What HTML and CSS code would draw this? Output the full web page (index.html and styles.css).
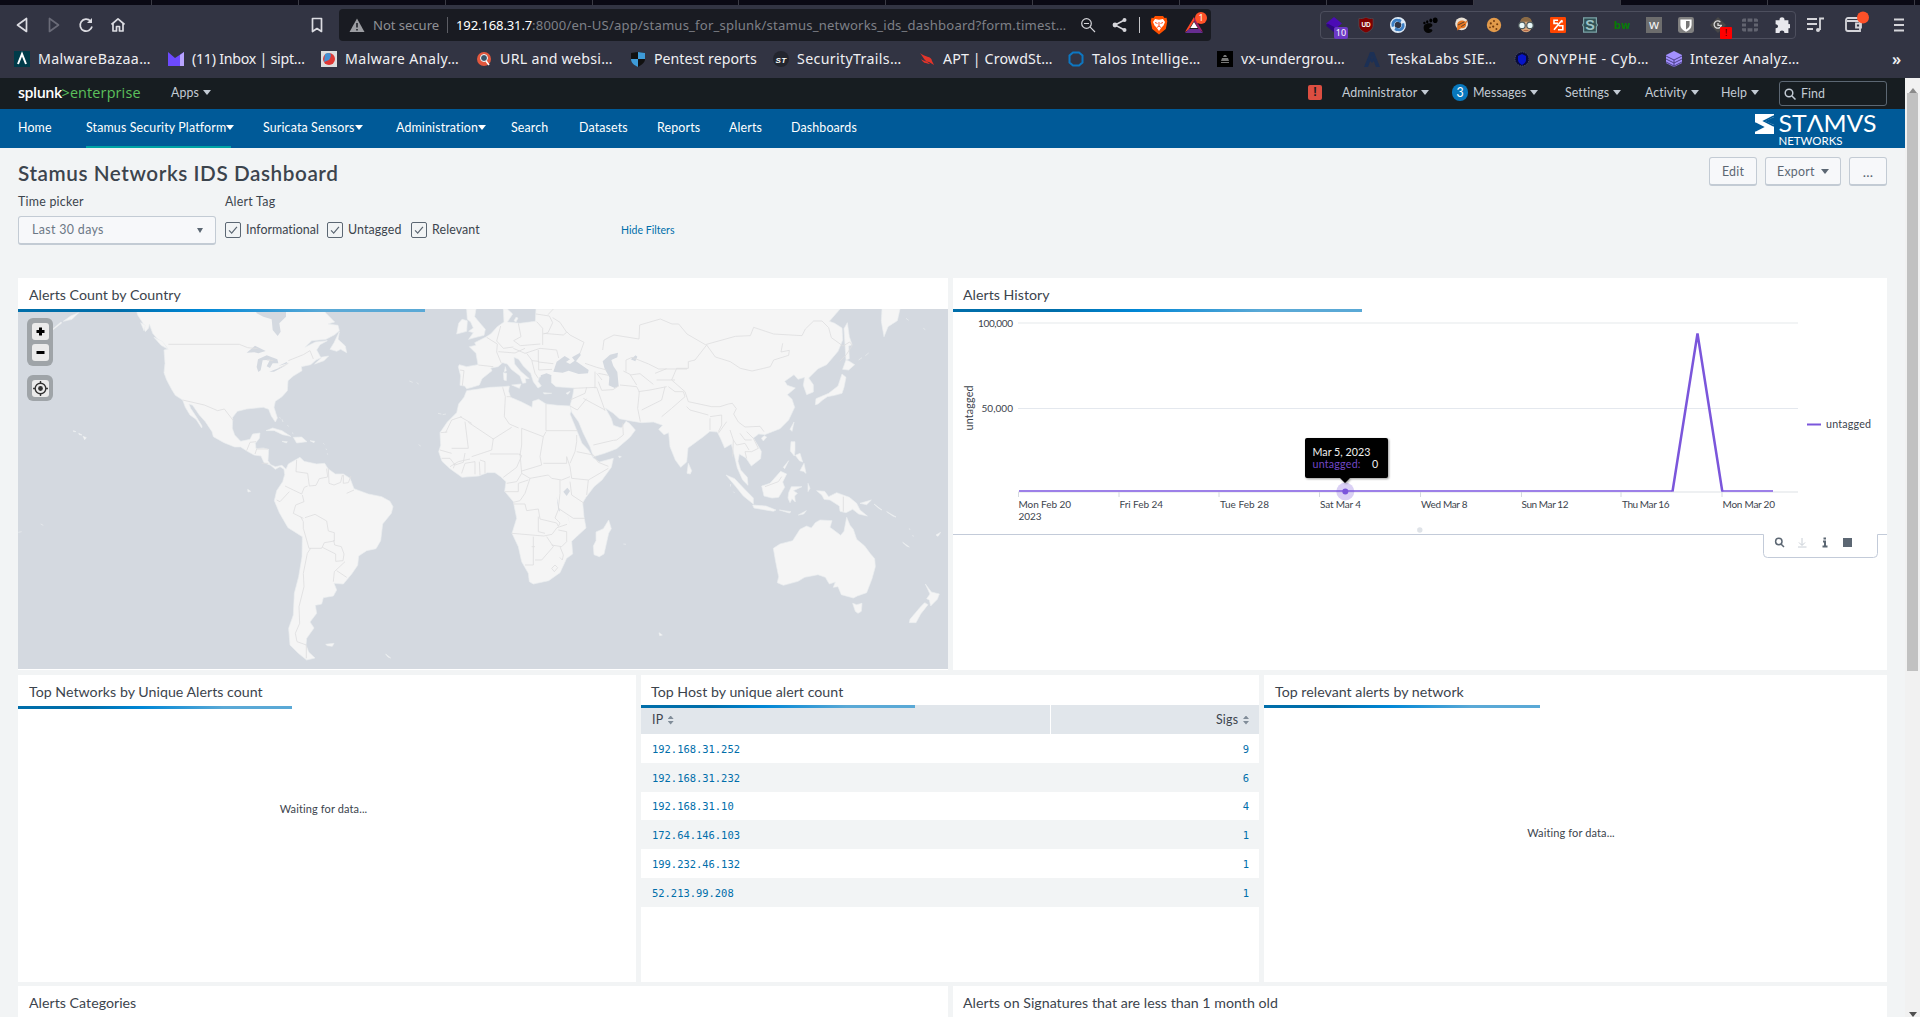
FILE: index.html
```html
<!DOCTYPE html>
<html lang="en">
<head>
<meta charset="utf-8">
<title>Stamus Networks IDS Dashboard</title>
<link rel="stylesheet" href="styles.css">
</head>
<body>
<div class="tabstrip"><i></i><i></i><i></i><i></i><i></i><i></i><i></i><i></i><i></i><i></i><i class="active"></i><i></i><i></i></div>

<div class="toolbar">
  <div class="browser-nav">
    <svg width="20" height="20" viewBox="0 0 20 20"><path d="M14.5 3.5v13L5.500 10z"/></svg>
    <svg class="dim" width="20" height="20" viewBox="0 0 20 20"><path d="M5.500 3.5v13L14.500 10z"/></svg>
    <svg width="20" height="20" viewBox="0 0 20 20"><path d="M14.500 6A6 6 0 1 0 16 11.500"/><path class="solid" d="M11 3h5v5h-5z"/></svg>
    <svg width="20" height="20" viewBox="0 0 20 20"><path d="M3.500 9.500L10 3.800l6.500 5.700M5 8.500V16h3.500v-4.500h3V16H15V8.500"/></svg>
  </div>
  <svg class="bookmark-icon" width="16" height="18" viewBox="0 0 16 18"><path d="M3.500 2.500h9v13L8 12.500l-4.500 3z"/></svg>
  <div class="urlbar">
    <svg class="warn" width="16" height="16" viewBox="0 0 16 16"><path d="M8 1.500L15.500 15H.5z"/><path class="mark" d="M8 6v4.500M8 12v1.600"/></svg>
    <span class="notsecure">Not secure</span><i class="sep"></i>
    <span class="url"><b>192.168.31.7</b><span>:8000/en-US/app/stamus_for_splunk/stamus_networks_ids_dashboard?form.timest…</span></span>
    <svg class="line zoomout" width="16" height="16" viewBox="0 0 16 16"><circle cx="6.500" cy="6.500" r="4.800"/><path d="M4 6.500h5M10.200 10.200L15 15"/></svg>
    <svg class="line share" width="16" height="16" viewBox="0 0 16 16"><path d="M12.500 3L3 8l9.500 5"/><g class="fill"><circle cx="12.500" cy="3" r="2"/><circle cx="3" cy="8" r="2.400"/><circle cx="12.500" cy="13" r="2"/></g></svg>
    <i class="sep light"></i>
    <svg class="brave" width="18" height="20" viewBox="0 0 18 20"><path fill="#ff5000" d="M5 1h8l1.500 2 2-.2.8 3.700-1.500 7.500L9 19.500 2.200 14 .7 6.500l.8-3.700 2 .2z"/><path fill="#fff" d="M5 4l4 .8L13 4l2 3-1.500 3.500-2 2L9 16l-2.500-3.500-2-2L3 7z"/><path stroke="#fb542b" fill="none" d="M5 7.500l2.500 1M13 7.500l-2.500 1M9 7v4l-2 1.500M9 11l2 1.500"/></svg>
    <span class="bat"><svg width="20" height="18" viewBox="0 0 20 18"><path fill="#ff4724" d="M10 1L1 16l3.500-2L10 5z"/><path fill="#9e1f63" d="M10 1l9 15-4-2-5-9z"/><path fill="#662d91" d="M1 17l4-4h10l4 4z"/><path fill="#fff" d="M10 6l3.700 6H6.300z"/></svg><em>1</em></span>
  </div>
  <div class="extensions">
    <svg viewBox="0 0 20 20"><path fill="#4b0bb5" d="M10 0l10 8-9 7-11-7z"/><path fill="#2f0780" d="M0 11l10 8 5-4-13-7z"/></svg>
    <svg viewBox="0 0 20 20"><path fill="#800000" stroke="#4d4d56" d="M10 0c3 2 6 2 9 2v8c0 5-4 8-9 10-5-2-9-5-9-10V2c3 0 6 0 9-2z"/><text x="10" y="12" fill="#fff" class="tiny">UD</text></svg>
    <svg viewBox="0 0 20 20"><circle cx="10" cy="10" r="7" fill="none" stroke="#dfeaf5" stroke-width="6"/><path d="M4 12C2 6 7 2 12 5l1-2M16 8c2 6-3 10-8 7l-1 2" fill="none" stroke="#3d7fc4" stroke-width="3.500"/></svg>
    <svg viewBox="0 0 20 20"><path fill="#050505" d="M3 10c3-3 10-3 10 0 0 3-4 3-4 4 0 2 4 0 4 3 0 1-2 3-5 3-6 0-7-7-5-10z"/><ellipse cx="16.500" cy="4" rx="3" ry="3.500"/><ellipse cx="11" cy="4.500" rx="1.800" ry="2.500"/><ellipse cx="6.500" cy="6" rx="1.500" ry="2"/><circle cx="3" cy="7.500" r="1.500"/></svg>
    <svg viewBox="0 0 20 20"><circle cx="9.500" cy="8.500" r="8" fill="#e8e0d5"/><path fill="#e87722" d="M4 9c1-5 7-6 10-3l3-2-2 5c1 3-3 6-6 5l-5 3z"/><path stroke="#333" fill="none" d="M5 10l8-4M9 12l5-3"/></svg>
    <svg viewBox="0 0 20 20"><circle cx="10" cy="10" r="9" fill="#e29a4a"/><g fill="#70380c"><circle cx="6" cy="8" r="1.300"/><circle cx="10" cy="5" r="1.200"/><circle cx="14" cy="9" r="1.300"/><circle cx="9" cy="12" r="1.400"/><circle cx="13" cy="15" r="1.200"/><circle cx="5" cy="13" r="1"/></g></svg>
    <svg viewBox="0 0 20 20"><path fill="#d9a77c" d="M3 7c0-8 14-8 14 0v6c-1 8-13 8-14 0z"/><path fill="#8a6a45" d="M3 6c0-8 14-8 14 0z"/><g fill="#e7f7f8" stroke="#4f5b5c" stroke-width="1.500"><circle cx="5" cy="10.500" r="4"/><circle cx="15" cy="10.500" r="4"/></g><path stroke="#a75034" d="M7 17h6"/></svg>
    <svg viewBox="0 0 20 20"><rect width="20" height="20" rx="1.500" fill="#ff4500"/><path d="M10 4H5v4h5M10 16h6v-5h-5M15 4L5 16M15 4v3" fill="none" stroke="#fff" stroke-width="2"/></svg>
    <svg viewBox="0 0 20 20"><path fill="#315155" stroke="#7ba3a6" stroke-width="1.500" d="M2 1h16v7l1.300 2-1.300 2v7H2v-7L.7 10 2 8z"/><text x="10" y="16.500" fill="#9dc3c6" class="glyph-s">S</text></svg>
    <svg viewBox="0 0 20 20"><text x="10" y="15" fill="#087b08" class="glyph-bw">bw</text></svg>
    <svg viewBox="0 0 20 20"><rect width="20" height="20" fill="#6d6d6d"/><text x="10" y="15.500" fill="#f4f4f4" class="glyph-w">w</text></svg>
    <svg viewBox="0 0 20 20"><rect width="20" height="20" rx="3" fill="#808080"/><path fill="#fff" d="M3 3h14v7c0 4-3 6.500-7 8.500-4-2-7-4.500-7-8.500z"/><path fill="#777" d="M10 5h4.500v5c0 2.500-2 4-4.500 5.500z"/></svg>
    <svg viewBox="0 0 20 20"><path fill="#474747" d="M10 0l10 10-10 10L0 10z"/><path d="M13 6.500a4.500 4.500 0 1 0 1 4M10 7.500v3h5" fill="none" stroke="#ddd" stroke-width="1.600"/></svg>
    <svg viewBox="0 0 20 20"><path fill="#626470" d="M0 4a2 2 0 0 1 2-2h3v4H0zM7 2h6v4H7zM15 2h3a2 2 0 0 1 2 2v2h-5zM0 8h5v4H0zM15 8h5v4h-5zM0 14h5v4H2a2 2 0 0 1-2-2zM7 14h6v4H7zM15 14h5v2a2 2 0 0 1-2 2h-3z"/></svg>
    <svg viewBox="0 0 20 20"><path fill="#e8e8ed" d="M2 4h5c-1-5 7-5 6 0h5v5c4-1 4 6 0 5v6h-5c0-4-6-4-6 0H2v-6c4 0 4-5 0-5z"/></svg>
    <span class="ext-count">10</span><span class="ext-alert">!</span>
  </div>
  <svg class="line media" width="20" height="20" viewBox="0 0 20 20"><path d="M2 4h10M2 9h10M2 14h6M15 15V3.500h4"/><circle class="fill" cx="13" cy="15" r="2"/></svg>
  <svg class="line wallet" width="26" height="26" viewBox="0 0 26 26"><path d="M16 8H5a2 2 0 0 0-2 2v9a2 2 0 0 0 2 2h12V11H4M18 13.500h-5v4h5z"/><circle cx="20" cy="7.500" r="6" fill="#ff5128" stroke="none"/></svg>
  <svg class="line burger" width="12" height="16" viewBox="0 0 12 16"><path d="M1 2.500h10M1 8h10M1 13.500h10"/></svg>
</div>

<div class="bookmarks">
  <a class="b1"><svg viewBox="0 0 16 16"><path fill="#003b49" d="M0 0h16v16H0z"/><path d="M4 13L8 3l4 10" fill="none" stroke="#fff" stroke-width="2"/></svg>MalwareBazaa…</a>
  <a class="b2"><svg viewBox="0 0 16 16"><path fill="#6d4aff" d="M0 1l7 6 9-6v14H0z"/><path fill="#b8a4ff" d="M12 4l4-3v14h-4z"/></svg>(11) Inbox | sipt…</a>
  <a class="b3"><svg viewBox="0 0 16 16"><path fill="#dedede" d="M0 0h16v16H0z"/><circle cx="8" cy="8" r="6" fill="#df3935"/><path fill="#4690d1" d="M4 3c8-4 6 4 4 6l-5 2z"/></svg>Malware Analy…</a>
  <a class="b4"><svg viewBox="0 0 16 16"><circle cx="8" cy="8" r="7" fill="#e2583e"/><circle cx="8" cy="7" r="3.500" fill="#39556b" stroke="#fff"/><path d="M10 10l3 4" stroke="#fff" stroke-width="1.500"/></svg>URL and websi…</a>
  <a><svg viewBox="0 0 16 16"><path fill="#111" d="M1 2l7-1 7 1v6c0 4-4 6-7 8-3-2-7-4-7-8z"/><path fill="#3e9bd8" d="M8 1l7 1v6H8zM1 8h7v8c-4-2-7-4-7-8z"/></svg>Pentest reports</a>
  <a class="b6"><svg viewBox="0 0 16 16"><circle cx="8" cy="8" r="8" fill="#23252e"/><text x="8" y="11.500" fill="#fff" class="glyph-st">ST</text></svg>SecurityTrails…</a>
  <a class="b7"><svg viewBox="0 0 16 16"><path fill="#e3342a" d="M1 2c4 4 12 3 12 8l2 4-5-3c-4 0-6-5-9-9zm1 6c4 3 5 1 9 5-5-1-7-1-9-5z"/></svg>APT | CrowdSt…</a>
  <a class="b1"><svg viewBox="0 0 16 16"><path d="M5 1.500h6l3.500 3v7l-3.500 3H5l-3.500-3v-7z" fill="none" stroke="#0d77c2" stroke-width="2"/></svg>Talos Intellige…</a>
  <a class="b7"><svg viewBox="0 0 16 16"><path d="M0 0h16v16H0z"/><path fill="#777" d="M4 11h8v1H4zm1-4h6l1 3H4zm2-3h2l1 2H6z"/></svg>vx-undergrou…</a>
  <a class="b6"><svg viewBox="0 0 16 16"><path fill="#1c3055" d="M6 1h4l6 15h-4L8 5 4 16H0zm0 9l2-4 2 4-2 2z"/></svg>TeskaLabs SIE…</a>
  <a class="b11"><svg viewBox="0 0 16 16"><circle cx="9" cy="8" r="7" fill="#090b39" stroke="#535663" stroke-dasharray="1 1"/><path fill="#0714c9" d="M5 5l4-2 4 2v4c0 2-2 4-4 5-2-1-4-3-4-5z"/></svg>ONYPHE - Cyb…</a>
  <a class="b4"><svg viewBox="0 0 16 16"><path fill="#a390ff" d="M8 0l8 4v8l-8 4-8-4V4z"/><path d="M0 5l8 4 8-4M0 8l8 4 8-4M0 11l8 4 8-4M8 9v7" stroke="#4c418b" fill="none"/></svg>Intezer Analyz…</a>
  <span class="more">»</span>
</div>

<div class="viewport">
<main>
  <div class="splunkbar">
    <span class="brand"><b>splunk</b><span>&gt;enterprise</span></span><span class="apps">Apps <i class="caret"></i></span>
    <span class="alertbadge">!</span><span>Administrator <i class="caret"></i></span><span class="messages"><em>3</em>Messages <i class="caret"></i></span><span>Settings <i class="caret"></i></span><span>Activity <i class="caret"></i></span><span>Help <i class="caret"></i></span>
    <span class="find"><svg width="12" height="12" viewBox="0 0 12 12"><circle cx="5" cy="5" r="3.800"/><path d="M8 8l3.500 3.500"/></svg>Find</span>
  </div>
  <nav>
    <a>Home</a><a class="current"><span>Stamus Security Platform<i class="caret"></i></span></a><a>Suricata Sensors<i class="caret"></i></a><a>Administration<i class="caret"></i></a><a>Search</a><a>Datasets</a><a>Reports</a><a>Alerts</a><a>Dashboards</a>
    <svg class="stamus" width="124" height="36" viewBox="0 0 124 36"><path fill="#fff" d="M1 2h19v3l-9 4 9 4v9H1v-3l8-4-8-4z"/><path d="M20 4l-10 5 10 5M1 11l8 4-8 4" stroke="#005a98" stroke-width="1.500" fill="none"/><text x="24.500" y="20" textLength="98" lengthAdjust="spacingAndGlyphs" class="lg">STΛMVS</text><text x="24.500" y="32.500" textLength="64" lengthAdjust="spacingAndGlyphs" class="sm">NETWORKS</text></svg>
  </nav>

  <header>
    <h1>Stamus Networks IDS Dashboard</h1>
    <div class="actions"><button>Edit</button><button>Export <i class="caret"></i></button><button class="dots">...</button></div>
  </header>
  <div class="filters">
    <div class="picker"><label>Time picker</label><div class="select">Last 30 days<i class="caret"></i></div></div>
    <div class="tags"><label>Alert Tag</label>
      <div class="checks">
        <span><svg viewBox="0 0 16 16"><path d="M3.500 8.500l3 3 6-7"/></svg>Informational</span>
        <span><svg viewBox="0 0 16 16"><path d="M3.500 8.500l3 3 6-7"/></svg>Untagged</span>
        <span><svg viewBox="0 0 16 16"><path d="M3.500 8.500l3 3 6-7"/></svg>Relevant</span>
      </div></div>
    <a class="hide">Hide Filters</a>
  </div>

  <div class="row first">
    <section><h2>Alerts Count by Country</h2>
      <div class="map">
        <svg width="930" height="360" viewBox="54 27 2790 1080">
          <rect x="54" y="27" width="2790" height="1080" class="sea"/>
          <g class="land">
            <path d="M408 27L413 45 428 68 436 95 446 84 448 72 458 100 470 114 498 138 502 148 492 150 495 190 492 218 500 240 516 270 526 286 548 300 556 322 570 345 588 358 605 384 606 378 590 352 572 325 567 312 578 316 598 345 616 365 636 395 640 410 672 428 704 441 722 441 742 454 762 465 783 468 792 488 812 496 826 508 840 500 852 508 854 524 848 545 830 572 823 602 838 638 864 683 907 710 906 770 896 830 883 880 880 945 866 985 870 1035 895 1060 920 1080 945 1074 926 1056 918 1035 920 1015 942 984 930 966 950 940 946 916 965 912 970 893 1000 888 1010 870 1002 850 1030 852 1055 822 1073 796 1076 768 1100 752 1128 746 1142 722 1148 672 1174 640 1179 620 1170 604 1145 590 1105 582 1078 572 1062 566 1050 535 1030 522 1006 522 984 506 974 490 950 492 912 484 900 472 882 482 865 492 858 508 846 496 826 500 812 494 804 482 806 448 790 444 768 446 766 430 778 415 780 399 758 402 750 418 722 424 704 405 697 385 698 352 712 334 740 327 790 322 806 328 814 348 826 366 832 354 822 322 826 304 846 290 862 272 864 242 880 228 906 212 904 200 932 194 948 180 966 172 944 192 972 182 986 168 962 172 950 150 960 134 982 122 946 126 915 142 935 122 978 118 1004 104 1018 92 1014 76 984 72 1004 66 978 40 968 27z"/>
            <path d="M1018 95L1014 118 1036 138 1040 158 1022 148 1010 154 990 148 1002 128zM798 392l20-8 28 8 26 17-24-5-25-12zM880 412l25-1 16 14-31 4zM846 424l16 1-3 4zM930 422l14 2-2 4zM462 112l25 12 18 24-22-12zM422 68l14 8-4 16zM155 90l28-24 2 3-28 22zM190 64l22-16 24-10-20 20zM220 392l8 3-7 0zM236 400l10 5-8-1zM249 409l10 4-5 6zM743 568l9 6-8 2zM977 1033l25-3-5 9-15-2zM1157 1062l15 12-8-3zM838 352l4 3M846 358l3 8M862 376l4 3M876 398l4 3M970 430l3 3M978 446l2 4M982 460l1 4M55 697l10-2M122 672l8 4M1228 243l10 4M1250 248l6 4M1314 340l10 2M1328 344l10-2M1256 434l6 4"/>
            <g transform="translate(1410)">
              <path d="M-10 272L20 268 60 262 98 260 118 258 116 274 122 292 155 306 186 322 188 304 206 298 228 312 262 316 300 318 304 332 300 342 322 395 336 430 355 450 370 474 388 486 430 475 424 502 396 540 372 560 348 592 338 608 342 650 348 684 326 704 305 724 308 762 290 775 270 818 236 842 190 852 178 845 175 820 155 785 145 740 126 700 140 655 130 605 104 574 108 545 92 530 75 518 52 518 26 528-24 532-60 506-84 484-94 455-88 436-90 398-68 366-40 338-34 312-18 292z"/>
              <path d="M-35 200L-28 228-30 256-16 258-10 266 6 262 28 255 36 236 66 212 62 204 84 200 98 188 112 192 124 208 150 228 158 250 168 248 166 236 178 236 152 214 134 192 132 172 146 178 160 198 182 220 190 245 204 264 214 258 204 244 208 232 228 222 244 226 244 248 258 260 284 262 312 264 308 288 300 318 306 338 326 366 340 400 360 440 370 470 404 460 440 446 480 412 496 390 478 370 468 364 454 384 430 376 424 356 406 324 430 340 448 356 478 362 514 368 550 366 578 376 566 388 582 404 596 398 600 440 616 480 632 502 650 486 654 444 700 410 720 394 742 396 752 416 764 444 784 432 794 470 802 504 818 540 834 556 832 532 812 510 804 484 808 462 828 474 844 498 872 476 874 454 850 414 866 402 884 404 930 386 956 360 974 322 966 298 952 284 976 264 952 256 944 244 972 224 984 238 1004 232 1000 256 1010 284 1030 276 1030 254 1016 234 1044 206 1070 194 1104 154 1118 120 1116 84 1094 70 1078 64 1110 27 L198 27 196 64 150 70 112 66 128 42 112 27 100 27 102 66 82 80 62 102 46 112 14 128 18 136-2 140 18 160 24 194-10 200-32 194z"/>
              <path d="M-10 27L18 27 14 50 34 74 46 88 42 106 18 112-4 118 10 98-4 94 10 84 2 66-8 58zM-40 102L-10 94-8 62-24 58-34 70zM102 240l-2-22 10 2-1 22zM103 215l3-15 3 12zM125 255l28-3-5 13zM220 278l25 2-22 2zM288 280l12-6-6 9zM132 62l6-10 6 2-6 12z"/>
              <path d="M1036 314L1038 296 1076 280 1104 258 1116 222 1128 232 1122 262 1116 280 1094 286 1072 290 1058 300 1044 312zM1118 208L1128 180 1138 184 1154 194 1136 210zM1122 86L1132 68 1138 110 1146 134 1136 138 1138 176 1128 180zM1236 27L1290 27 1282 62 1254 80 1242 110 1234 64zM960 388l12-22-6 28zM874 415l8-8 8 4-10 12zM655 490l10 22-4 10-10-2zM963 425l12 0 0 25-2 18-12-15zM976 466l14-6 8 26-10-4zM990 512l12-22 6 30-8-6zM940 502l16-20-12 24zM768 525L794 536 824 568 850 594 850 612 820 588 796 558zM875 558L900 550 932 514 950 522 938 546 944 562 926 592 906 594 882 588zM956 578L964 560 996 560 970 572 982 580 974 588 976 606 966 596 960 608 954 594zM848 615L888 618 918 630 910 634 852 624zM928 630l35 5-5 4zM985 645l24-13-8 10zM1014 550l6 15-6 10zM1040 572L1064 574 1076 590 1100 578 1138 592 1160 610 1170 630 1192 648 1166 642 1148 628 1128 638 1110 634 1108 618 1080 600 1062 598 1056 586z"/>
              <path d="M910 745L930 732 968 722 990 688 1010 678 1024 684 1036 668 1050 660 1086 662 1080 682 1112 706 1122 694 1130 652 1140 676 1150 688 1160 718 1184 738 1200 760 1214 776 1216 800 1206 836 1190 878 1162 888 1150 894 1114 884 1104 860 1090 862 1096 846 1078 852 1066 832 1044 824 1004 832 984 844 940 856 922 848 926 830 916 780zM1148 910L1160 914 1176 910 1174 934 1164 940 1156 934zM1366 852L1384 876 1408 882 1402 898 1382 918 1378 900 1370 896 1380 882zM1352 920L1364 908 1374 914 1352 942 1338 968 1318 968 1320 958zM416 660L424 686 416 700 402 762 388 770 372 764 370 738 378 722 378 696 400 686zM446 468l8 2-6 3zM567 998l10 7-8 2zM1398 705l14-8-8 12zM1298 727l20 14-8-3zM1170 610l34-10-14 14zM1212 612l24 18-8-4zM1250 635l28 16-8-2zM1186 167l10-8M1166 180l10-7M782 552l-1 8M790 575l4 4M1308 55l8 6M1360 85l6 4M460 732l8 1M1318 685l2 5M1328 705l2 5"/>
            </g>
          </g>
          <g class="sea">
            <path d="M765 27L770 40 790 50 815 58 818 90 833 108 842 95 838 70 858 50 858 27zM740 158l25-21 32 16-22 7-12-3zM775 216l-5-15 4-23 26-12 32 12 3 12-17 0-8 14-10-5 10-20-22 2-6 30zM808 215l52-20-38 20zM835 198l25-12 3 4z"/>
            <g transform="translate(1410)"><path d="M250 215L260 185 284 168 300 178 288 186 300 192 314 182 306 172 330 158 332 166 318 184 356 210 354 220 326 222 296 212 278 218zM398 184L420 164 444 158 442 172 424 180 430 198 442 216 446 258 434 264 416 256 418 232 404 206zM482 178l15-12 5 4-6 14zM280 575l12-12 8 10-10 15zM260 590l10 45-5-5zM292 645l8 30-5-20zM212 226L230 220 244 226 238 240 246 262 228 262 216 244z"/></g>
          </g>
          <g class="border">
            <path d="M505 133h213l25 10 30 3M800 180l20 2M835 205l30-15M865 182l45-18 20-12 10 25M548 300l65 15 40 17 20-5 27 35M740 452l10-25 18-2M765 462l5-15 34 0M785 490l20 0M890 480l-2 35 35 5 5 38 20-2 10-20 25-5-3-25M985 505l2 45 15 5 20-8 5-22M1030 525v25l15-2 8-20M1040 580l22-10M855 558l50 24 8-20 10-4M830 600l10 5 28-30M907 585l5 20-25 10-7 25 30 15M915 653l30-10 35 20 5 30 18 5 0 25-30 5-8 17-38 0-17-60 0-20-8-15M967 742l40 20 0 22 22-2 3-20-8-22-20-5-3-15M1035 785l-32 30-3 30M1010 812l30 20M932 745l-10 15-12 60 2 40-15 60 2 50-13 30 5 25 28 10v40M1385 350l-30 10-18 38M1322 398l20-2M1355 445h50l-10-80M1380 350l35 20M1320 450l35 10M1325 475l25 0 15 20 25-8 5-28M1360 505l5-15M1385 520l10-30 30-5"/>
            <g transform="translate(1410)">
              <path d="M-30 210l12 2-5 45M25 195l45 5M50 112l32 20-2 24 14 34M92 78l-12 45 20 22 30-4M145 70l8 40-22 12 20 15 60-5M200 65l18 20 0 50M198 42l40 6 10 20-14 30-14 4M234 44l16-17M220 100l60 5 10-8-20-30-22-14M290 95l10 10 42 22-12 33M130 145l35 15 45-15 50 5 6 24M85 155l50 4 30-14M170 160l15 20 10 40 10 15M205 150l0 36 45 5M186 182l20 2 0 26 40-2M345 190l35 12 30 8M375 215l0 50M380 220l16 20M385 220l30 6M310 265l70-3 25 70M300 300l45-20 5-18M300 318l22 12 28-34M340 295l65 35M370 435l60-14 10-1M440 420l20-15-2-35M385 245l10 26 34-2 18-12M398 150l4-30 30-15 75 12 2-42 62-18 35 15 20 0 25 30 55 32 90-25 45-2 10-25 60 20 85 5 10-20 25-24 25 0 20 20 8 30 35 25 20-12 8 10-18 28-20 20M710 135l26 36 45 14 30 20 35 8 35-8 20-5 10-20 45-14 2-15-25 5 5-26M710 135l-35 45-20 5 0 20-35 0-15 35 40 35 10 30 70 15 25 0 25-8 12-2 12 16-8 16 14 24 20 15 45-2 12 16M450 255l50 5 8 15-5 50 8 40M505 275l35-5 50-10M500 255l-20-32-20-10M468 215v-35l18-8 50 20 30 15 85 0M480 225l30-4 40 32M555 220l35-14M560 240l55 0M585 260l-10 40-60 30M595 260l20 15 25 0 5 15-40 35-30 25M650 320l10 10 55 15M720 355l0 35M720 350l35-5 0 30-10 20M770 365l-25 35M780 390l10 30-2 50M790 420l10 15 25-5 12 20M830 395l20 20 15 30-20 10-20 0 5 20M810 400l15 20 20 0M885 560l40-15 10-15M1120 590v45"/>
              <path d="M228 312v80h95M228 395l-8 15-65-25 0 50-5 30M98 262l8 28-3 60 15 22 28 12M110 290l14 0M125 382l-55 35-75-50M70 415l-5 35-60 20M60 462l85 0 10 5-15 35-40 30M220 410l-10 60 5 25-60 18M150 460l5 60-15 25-30 5M155 520l25 15 55-10 10 10 30 5 25-10M220 490l70 0 0-20 10 30 5 35 50 5 60-35M320 405l0 20-5 30-15 35M320 455l50 10 15 22 30 12M355 540l-5 45M300 545l5 40 38 25M270 540v40l-5 45 45 30 35 0M180 535l-15 45-15 22-20 5M105 575l40 0 0-25 30-10M130 612h35l5 20 35-5 5 30 50 12 5 10 5-10-15-15 10-25M205 650l0 45 20 5M126 700l95 8 25-5 15-20 30-10M190 710l0 85-25 0M195 740l-10 0M230 710l20 30-35 40-20 0M245 735l30 5 15-15 0-30-25-5M270 740l10 25-3 15-8-8M245 805l10-10 8 8-10 12zM45 520v-35l-15-5M30 525l-2-40M15 485v38M-60 500l25-15 35-8"/>
            </g>
          </g>
        </svg>
        <div class="mapctl zoomctl"><span><svg viewBox="0 0 17 17"><path d="M4.500 8.500h8M8.500 4.500v8"/></svg></span><span><svg viewBox="0 0 17 17"><path d="M4.500 8.500h8"/></svg></span></div>
        <div class="mapctl locate"><span><svg viewBox="0 0 16 16"><circle cx="8" cy="8" r="5"/><circle cx="8" cy="8" r="1.600" fill="#333"/><path d="M8 1v2M8 13v2M1 8h2M13 8h2"/></svg></span></div>
      </div>
    </section>
    <section><h2>Alerts History</h2>
      <svg class="chart" width="934" height="252" viewBox="953 309 934 252">
        <path d="M1018 323h780" class="grid g2"/><path d="M1018 408.500h780" class="grid"/>
        <path d="M1018 492h780" class="axis"/>
        <path class="tick" d="M1018.500 492v5M1119 492v5M1219 492v5M1319.500 492v5M1420.500 492v5M1521.500 492v5M1621 492v5M1722 492v5"/>
        <path d="M1019 491h653.500M1722 491h51" class="flat"/><path d="M1672.500 491.500l25-158 24.800 158" class="peak"/>
        <g class="lbl"><text x="978" y="327" textLength="35">100,000</text><text x="981.500" y="412" textLength="31.500">50,000</text>
          <text class="un" transform="translate(972.500 430.500) rotate(-90)" textLength="45">untagged</text><text class="un" x="1826" y="428" textLength="45">untagged</text>
          <text x="1018.500" y="508" textLength="52.500">Mon Feb 20</text><text x="1018.500" y="520" textLength="23">2023</text><text x="1119.500" y="508" textLength="43.500">Fri Feb 24</text><text x="1220" y="508" textLength="49">Tue Feb 28</text><text x="1320" y="508" textLength="41">Sat Mar 4</text><text x="1421" y="508" textLength="46.500">Wed Mar 8</text><text x="1521.500" y="508" textLength="47">Sun Mar 12</text><text x="1622" y="508" textLength="47.500">Thu Mar 16</text><text x="1722.500" y="508" textLength="52.500">Mon Mar 20</text></g>
        <path d="M1807 424.500h14" class="peak key"/>
        <circle cx="1345.300" cy="491.500" r="9" fill="#7b56db" opacity=".28"/><circle cx="1345.300" cy="491.500" r="3" fill="#7b56db"/>
        <g class="tip"><path d="M1307 438h79a2 2 0 0 1 2 2v36a2 2 0 0 1-2 2h-36l-5 5-5-5h-33a2 2 0 0 1-2-2v-36a2 2 0 0 1 2-2z"/><text class="un" x="1312.500" y="455.500" textLength="58">Mar 5, 2023</text><text x="1312.500" y="468" textLength="48" class="v un">untagged:</text><text class="un" x="1372" y="468">0</text></g>
        <circle cx="1419.800" cy="530" r="2.700" fill="#dfe3e8"/>
        <path class="foot" d="M953 534.500h810.500v19a4 4 0 0 0 4 4h106a4 4 0 0 0 4-4v-19h9.500"/>
        <g class="tools"><circle cx="1778.800" cy="541.500" r="3.200"/><path d="M1781 544l3 3"/><path class="off" d="M1802 538v7M1799 542.500l3 3 3-3M1798 547h8.500"/><path class="info" d="M1823.500 538.500h2.500M1823 541.500h2v5M1822.500 546.500h5"/><path class="stop" d="M1843 538h9v9h-9z"/></g>
      </svg>
    </section>
  </div>

  <div class="row second">
    <section class="low"><h2>Top Networks by Unique Alerts count</h2><p class="wait w1">Waiting for data...</p></section>
    <section><h2>Top Host by unique alert count</h2>
      <table><thead><tr><th>IP <i class="sort"></i></th><th>Sigs <i class="sort"></i></th></tr></thead>
        <tbody><tr><td>192.168.31.252</td><td>9</td></tr><tr><td>192.168.31.232</td><td>6</td></tr><tr><td>192.168.31.10</td><td>4</td></tr><tr><td>172.64.146.103</td><td>1</td></tr><tr><td>199.232.46.132</td><td>1</td></tr><tr><td>52.213.99.208</td><td>1</td></tr></tbody></table>
    </section>
    <section><h2>Top relevant alerts by network</h2><p class="wait w2">Waiting for data...</p></section>
  </div>

  <div class="row third"><section><h2>Alerts Categories</h2></section><section><h2>Alerts on Signatures that are less than 1 month old</h2></section></div>
</main>
<aside class="scroll"><i class="up"></i><i class="thumb"></i><i class="down"></i></aside>
</div>
</body>
</html>
```
FILE: styles.css
```css
* { box-sizing: border-box; }
body { margin: 0; height: 1017px; overflow: hidden; font: 12.4px/16px Lato, sans-serif; color: #3c444d; background: #f2f4f5; display: flex; flex-direction: column; }
svg { flex: none; display: block; }
i, em { font-style: normal; }

.tabstrip { display: flex; flex: none; height: 5px; background: #0a0914; padding-left: 5px; }
.tabstrip i { width: 146.900px; flex: none; border-right: 1px solid #3b3b45; }
.tabstrip .active { background: #323443; }

.toolbar { height: 37px; flex: none; background: #323443; display: flex; align-items: center; padding: 4px 0 1px 12px; color: #e3e3e8; font-family: "Noto Sans", sans-serif; }
.browser-nav { display: flex; gap: 12px; width: 297px; }
.browser-nav svg, .bookmark-icon { fill: none; stroke: #dcdce2; stroke-width: 1.700; stroke-linejoin: round; }
.browser-nav .dim { stroke: #6a6b78; }
.browser-nav .solid { fill: #dcdce2; stroke: none; clip-path: polygon(100% 0, 100% 100%, 0 100%); }
.urlbar { margin-left: 14px; width: 872px; height: 32px; border-radius: 4px; background: #191b22; display: flex; align-items: center; padding-left: 10px; font-size: 13.100px; }
.warn { fill: #9c9da2; margin-right: 8px; }
.warn .mark { stroke: #191b22; stroke-width: 1.500; }
.notsecure { width: 74px; color: #8f9095; letter-spacing: -.05px; }
.sep { width: 1px; height: 16px; background: #5c5d64; margin-right: 8px; flex: none; }
.url { width: 624px; white-space: nowrap; color: #7e8087; letter-spacing: .190px; }
.url b { font-weight: 400; color: #fff; display: inline-block; width: 76px; letter-spacing: -.15px; }
.line { fill: none; stroke: #d5d5da; stroke-width: 1.500; }
.line .fill { fill: #d5d5da; stroke: none; }
.zoomout { stroke-width: 1.200; }
.share { margin-left: 16px; }
.sep.light { background: #c4c4c8; margin: 0 10px 0 11px; }
.bat { position: relative; margin-left: 16px; }
.bat em { position: absolute; left: 11px; top: -4px; width: 12px; height: 12px; border-radius: 6px; background: #ff5128; color: #fff; font-size: 9px; line-height: 12px; text-align: center; }
.extensions { position: relative; margin-left: 109px; width: 476px; height: 28px; border: 1px solid #4d4f5e; border-radius: 4px; display: flex; align-items: center; gap: 16px; padding-left: 5px; }
.extensions > svg { width: 16px; height: 16px; }
.tiny { font: bold 8px "Liberation Sans", sans-serif; text-anchor: middle; }
.glyph-s { font: bold 18px "Liberation Sans", sans-serif; text-anchor: middle; }
.glyph-bw { font: bold 12.500px "DejaVu Sans", sans-serif; text-anchor: middle; }
.glyph-w { font: 16px "Noto Sans", sans-serif; text-anchor: middle; }
.glyph-st { font: italic bold 8px "Liberation Sans", sans-serif; text-anchor: middle; }
.ext-count { position: absolute; left: 13px; top: 15px; width: 14px; height: 12px; background: #6c39c5; border-radius: 2px; font-size: 9px; line-height: 12px; text-align: center; color: #fff; }
.ext-alert { position: absolute; left: 399px; top: 15px; width: 12px; height: 12px; background: #f00; border-radius: 1px; font-size: 9px; line-height: 12px; text-align: center; color: #400; }
.media { margin-left: 9px; }
.media, .wallet, .burger { stroke-width: 1.800; }
.wallet { margin-left: 18px; margin-top: -4px; }
.burger { margin-left: 24px; }

.bookmarks { height: 36px; flex: none; background: #323443; display: grid; grid-template-columns: 154px 153px 155px 154px 143px 146px 149px 149px 147px 149px 153px 226px auto; padding: 0 0 2px 14px; align-items: center; font: 14.200px/20px "Noto Sans", sans-serif; color: #f0f0f3; white-space: nowrap; }
.bookmarks a { display: flex; align-items: center; gap: 8px; letter-spacing: 0; }
.bookmarks a svg { width: 16px; height: 16px; }
.bookmarks .b1 { letter-spacing: .350px; }
.bookmarks .b2 { letter-spacing: -.250px; }
.bookmarks .b3 { letter-spacing: .430px; }
.bookmarks .b4 { letter-spacing: .270px; }
.bookmarks .b6 { letter-spacing: .350px; }
.bookmarks .b7 { letter-spacing: .140px; }
.bookmarks .b11 { letter-spacing: .550px; }
.more { font-size: 16px; font-weight: 600; }

.viewport { flex: 1; min-height: 0; display: flex; overflow: hidden; }
main { width: 1905px; flex: none; }
.caret { display: inline-block; border: 4px solid transparent; border-top: 5px solid currentColor; border-bottom: 0; margin-left: 1px; vertical-align: 2px; }
.splunkbar { height: 31px; background: #171d21; color: #c3cbd4; display: grid; grid-template-columns: 153px 1137px 34px 110px 113px 80px 76px 58px 108px; align-items: center; padding: 0 0 2px 18px; white-space: nowrap; letter-spacing: .060px; }
.brand { font: 14.400px/20px "Open Sans", sans-serif; letter-spacing: .150px; color: #5cc05c; }
.brand b { color: #fff; font-weight: 600; display: inline-block; width: 43.500px; letter-spacing: -.450px; }
.alertbadge { width: 14px; height: 15px; border-radius: 2px; background: #dc4e41; color: #171d21; font: bold 12px/15px "Liberation Sans", sans-serif; text-align: center; }
.messages { display: flex; align-items: center; }
.messages em { width: 16px; height: 17px; border-radius: 9px; background: #0877bd; color: #fff; text-align: center; line-height: 17px; margin-right: 5px; }
.messages .caret { margin-left: 4px; vertical-align: 0; }
.find { height: 25px; border: 1px solid #5c6773; border-radius: 3px; display: flex; align-items: center; gap: 5px; padding-left: 4px; position: relative; top: 1px; }
.find svg { fill: none; stroke: #c3cbd4; stroke-width: 1.500; }
nav { height: 39px; background: #005a98; color: #fff; display: grid; grid-template-columns: 68px 177px 133px 115px 68px 78px 72px 62px 963px 124px; padding-left: 18px; line-height: 37px; white-space: nowrap; }
nav a { letter-spacing: .150px; }
nav .caret { margin-left: 0; }
nav .current span { display: inline-block; width: 145px; height: 39px; border-bottom: 2px solid #00a4a6; }
.stamus { margin-top: 3px; overflow: visible; }
.stamus text { fill: #fff; }
.stamus .lg { font: 23.500px Lato, "DejaVu Sans", sans-serif; }
.stamus .sm { font: 12px Lato, sans-serif; }

header { display: flex; justify-content: space-between; padding: 9px 18px 0; height: 45px; }
h1 { margin: 4px 0 0; font: 600 20.700px/24px Lato, sans-serif; letter-spacing: .570px; color: #3c444d; }
.actions { display: flex; gap: 8px; }
button { height: 29px; border: 1px solid #c3cbd4; border-bottom-width: 2px; border-radius: 3px; background: #f7f8fa; font: 12.400px Lato, sans-serif; color: #5c6773; padding: 0; width: 48px; letter-spacing: .200px; }
button:nth-child(2) { width: 76px; }
button:nth-child(2) .caret { margin-left: 3px; vertical-align: 1.500px; }
.dots { width: 38px; font-size: 14px; }
.filters { display: flex; height: 85px; padding-left: 18px; gap: 9px; letter-spacing: .250px; }
label { display: block; height: 23px; padding-top: 1px; }
.select { width: 198px; height: 29px; border: 1px solid #c3cbd4; border-bottom-width: 2px; border-radius: 3px; background: #f7f8fa; color: #6b7785; padding: 0 12px 0 13px; display: flex; justify-content: space-between; align-items: center; line-height: 16px; letter-spacing: .350px; }
.select .caret { border-left-width: 3px; border-right-width: 3px; color: #5c6773; }
.tags { width: 387px; }
.checks { display: flex; padding-top: 6px; }
.checks span { display: flex; align-items: center; gap: 5px; width: 102px; line-height: 16px; letter-spacing: .020px; }
.checks span + span { width: 84px; letter-spacing: .120px; }
.checks svg { width: 16px; height: 16px; border: 1px solid #5c6773; border-radius: 2px; fill: none; stroke: #5c6773; stroke-width: 1.400; }
.hide { font-size: 10.500px; color: #006eaa; padding-top: 29px; letter-spacing: .030px; }

.row { display: grid; gap: 5px; padding: 0 18px; margin-bottom: 4px; }
.first, .third { grid-template-columns: 930px 934px; }
.first { height: 392px; margin-bottom: 5px; }
.second { height: 307px; grid-template-columns: 618px 618px 623px; }
.third { height: 80px; }
section { background: #fff; position: relative; min-width: 0; }
h2 { margin: 0; height: 31px; padding: 9px 11px 0; font: 14.200px/16px Lato, sans-serif; color: #3c444d; letter-spacing: .020px; }
section:nth-child(2) h2 { padding-left: 10px; }
section::before { content: ""; position: absolute; z-index: 2; left: 0; top: 31px; height: 3px; width: 407px; background: linear-gradient(90deg, #006eaa 0, #006eaa 25%, #0087d6 45%, #5aa9d6 75%); }
.first section:nth-child(2)::before { width: 409px; }
.second section::before { width: 274px; top: 30px; }
.second .low::before { top: 31px; }
.second section:last-child::before { width: 276px; }
.second h2 { height: 30px; }
.map { position: relative; height: 360px; }
.sea { fill: #d4d9e0; }
.land { fill: #f5f5f5; stroke: #eceef0; stroke-width: 2; stroke-linejoin: round; }
.border { fill: none; stroke: #dfdfe0; stroke-width: 2.500; stroke-linejoin: round; }
.mapctl { position: absolute; left: 9px; width: 26px; padding: 4.500px 4.500px; border-radius: 6px; background: #9fa4a8; display: grid; gap: 4px; }
.mapctl span { width: 17px; height: 17px; background: #ebebeb; border-radius: 3px; }
.mapctl svg { width: 17px; height: 17px; fill: none; stroke: #000; stroke-width: 3; }
.zoomctl { top: 9px; height: 48px; padding-top: 5px; }
.locate { top: 66px; height: 26px; }
.locate svg { stroke: #333; stroke-width: 1.300; }
.chart text { font: 10px Lato, sans-serif; fill: #3c444d; }
.chart .un { font-size: 10.700px; }
.grid { stroke: #e4e8ee; }
.g2 { stroke: #f2f4f5; stroke-width: 2; }
.axis { stroke: #dde1e5; stroke-width: 1; }
.tick { stroke: #d5dae0; }
.flat { fill: none; stroke: #9d80e8; stroke-width: 2; }
.peak { fill: none; stroke: #7b56db; stroke-width: 2.500; stroke-linejoin: bevel; }
.key { stroke-width: 2; }
.tip path { filter: drop-shadow(1px 1px 1px rgba(0,0,0,.4)); }
.chart .tip text { fill: #f0f0f0; }
.chart .tip .v { fill: #7347c7; }
.foot { fill: none; stroke: #c3cbd9; }
.tools { fill: none; stroke: #5c6773; stroke-width: 1.500; }
.tools .off { stroke: #c8ced5; stroke-width: 1; }
.tools .info { stroke-width: 2; }
.tools .stop { fill: #5c6773; stroke: none; }

.wait { margin: 0; text-align: center; font-size: 11px; letter-spacing: .120px; padding-right: 7px; }
.w1 { padding-top: 96px; }
.w2 { padding: 120px 9px 0 0; }
table { width: 100%; border-collapse: collapse; table-layout: fixed; }
th { background: #e1e6eb; height: 29px; font-weight: 400; padding: 0 11px; text-align: left; letter-spacing: .300px; }
th:last-child, td:last-child { text-align: right; width: 209px; padding-right: 10px; }
th:last-child { border-left: 1px solid #fff; }
td { height: 28.800px; padding: 1px 11px 0; font: 10.450px/16px "DejaVu Sans Mono", monospace; color: #006eaa; }
tbody tr:nth-child(even) { background: #f2f4f5; }
.sort { display: inline-block; width: 6px; height: 9px; margin-left: 1px; vertical-align: -1px; background: #818d99; clip-path: polygon(50% 0, 100% 40%, 0 40%, 0 60%, 100% 60%, 50% 100%, 0 60%, 0 40%); }

.scroll { width: 15px; background: #f1f1f1; display: flex; flex-direction: column; align-items: center; }
.scroll .up { height: 15px; border: 4px solid transparent; border-bottom: 5px solid #8a8a8a; border-top-width: 6px; width: 0; }
.scroll .thumb { width: 11px; height: 578px; background: #c1c1c1; }
.scroll .down { margin-top: auto; border: 4px solid transparent; border-top: 5px solid #505050; border-bottom: 0; }
```
